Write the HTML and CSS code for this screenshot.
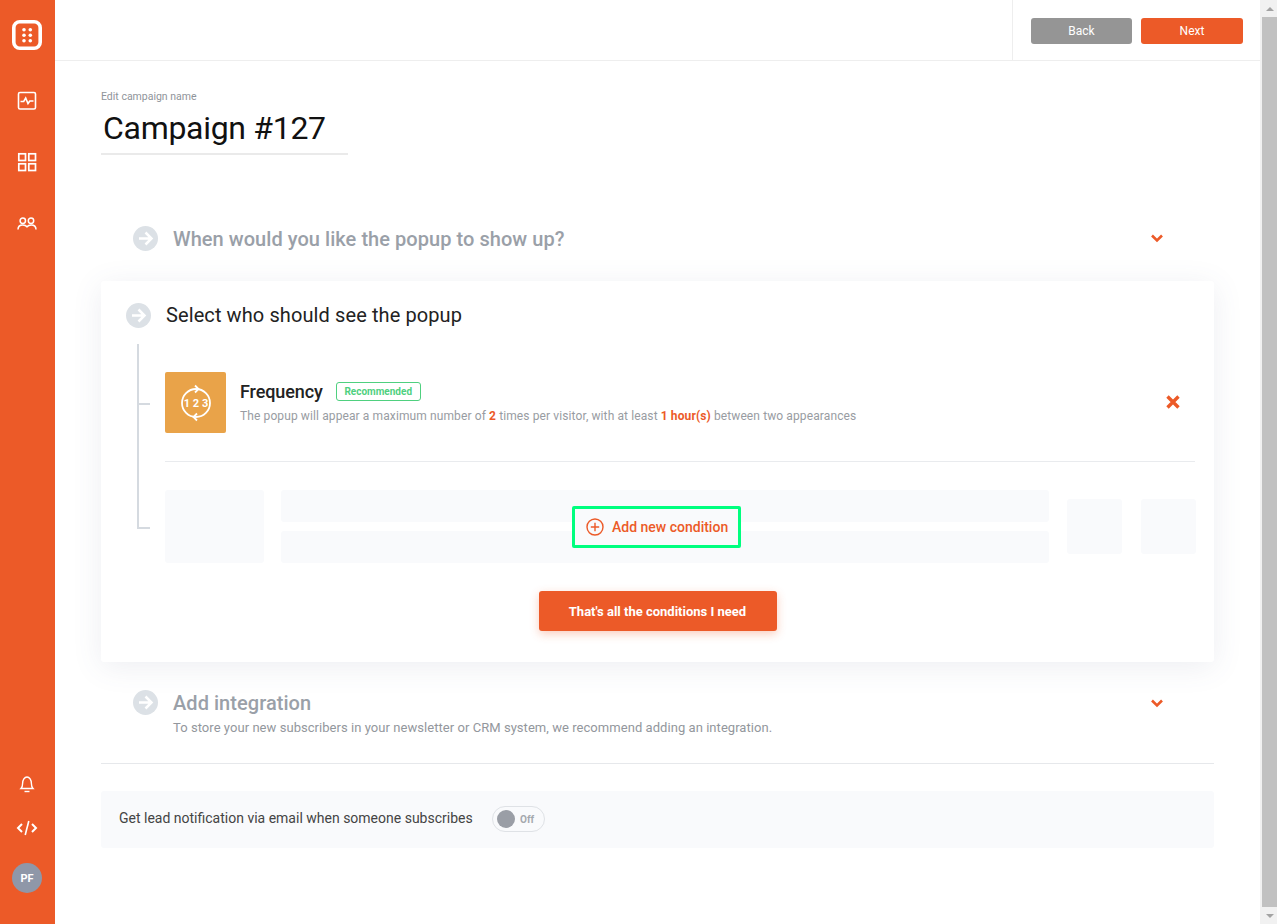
FILE: index.html
```html
<!DOCTYPE html>
<html lang="en">
<head>
    <meta charset="UTF-8">
    <title>Campaign #127</title>
    <link rel="stylesheet" href="styles.css">
</head>
<body>
    <div class="app">
        <nav class="sidebar">
            <div class="logo">
                <svg width="30" height="30" viewBox="0 0 30 30"><rect x="1.800" y="1.800" width="26.400" height="26.400" rx="6" fill="none" stroke="#fff" stroke-width="3.600"/><g fill="#fff"><circle cx="12" cy="9.800" r="1.800"/><circle cx="18.300" cy="9.800" r="1.800"/><circle cx="12" cy="15.300" r="1.800"/><circle cx="18.300" cy="15.300" r="1.800"/><circle cx="12" cy="20.800" r="1.800"/><circle cx="18.300" cy="20.800" r="1.800"/></g></svg>
            </div>
            <a class="nav-item">
                <svg width="20" height="20" viewBox="0 0 20 20" fill="none" stroke="#fff" stroke-width="1.600"><rect x="1.500" y="1.500" width="17" height="16.500" rx="1.500"/><path d="M3.500 10.500h3.200l2-3.500 2.300 5.500 1.800-2.500h3.700"/></svg>
            </a>
            <a class="nav-item">
                <svg width="20" height="20" viewBox="0 0 20 20" fill="none" stroke="#fff" stroke-width="1.700"><rect x="1.800" y="1.800" width="6.700" height="6.700"/><rect x="11.800" y="1.800" width="6.700" height="6.700"/><rect x="1.800" y="11.800" width="6.700" height="6.700"/><rect x="11.800" y="11.800" width="6.700" height="6.700"/></svg>
            </a>
            <a class="nav-item">
                <svg width="20" height="20" viewBox="0 0 20 20" fill="none" stroke="#fff" stroke-width="1.500"><circle cx="5.800" cy="7.800" r="2.700"/><circle cx="14" cy="7.800" r="2.700"/><path d="M1 16.500c0-3 2.200-4.600 4.800-4.600 1.800 0 3.300.6 4.200 1.800.9-1.200 2.400-1.800 4.200-1.800 2.600 0 4.800 1.600 4.800 4.600"/></svg>
            </a>
            <div class="sidebar-bottom">
                <a class="nav-item">
                    <svg width="20" height="20" viewBox="0 0 20 20" fill="none" stroke="#fff" stroke-width="1.400"><path d="M4 14.500c1-1 1.600-2 1.600-5 0-3.500 1.900-6.500 4.400-6.500s4.400 3 4.400 6.500c0 3 .6 4 1.600 5z"/><path d="M7.500 17.500h5"/></svg>
                </a>
                <a class="nav-item">
                    <svg width="22" height="20" viewBox="0 0 22 20" fill="none" stroke="#fff" stroke-width="2"><path d="M6 6l-4 4 4 4M16 6l4 4-4 4"/><path d="M12.800 3l-3.600 14" stroke-width="1.600"/></svg>
                </a>
                <div class="avatar">PF</div>
            </div>
        </nav>

        <div class="main">
            <header class="topbar">
                <div class="topbar-actions">
                    <button class="btn btn-back">Back</button>
                    <button class="btn btn-next">Next</button>
                </div>
            </header>

            <div class="content">
                <div class="campaign-name">
                    <label>Edit campaign name</label>
                    <div class="name-input">Campaign #127</div>
                </div>

                <section class="step">
                    <span class="step-arrow">
                        <svg width="25" height="25" viewBox="0 0 25 25"><circle cx="12.500" cy="12.500" r="12.500" fill="#dce1e6"/><path d="M6 12.500h12M12.500 6.500l6 6-6 6" fill="none" stroke="#fff" stroke-width="2.500"/></svg>
                    </span>
                    <div class="step-body">
                        <h2>When would you like the popup to show up?</h2>
                    </div>
                    <svg class="chevron" width="14" height="10" viewBox="0 0 14 10"><path d="M2 2.500l5 5 5-5" fill="none" stroke="#ec5a28" stroke-width="2.600"/></svg>
                </section>

                <section class="card">
                    <div class="card-title">
                        <svg width="25" height="25" viewBox="0 0 25 25"><circle cx="12.500" cy="12.500" r="12.500" fill="#dce1e6"/><path d="M6 12.500h12M12.500 6.500l6 6-6 6" fill="none" stroke="#fff" stroke-width="2.500"/></svg>
                        <h2>Select who should see the popup</h2>
                    </div>

                    <div class="tree">
                        <div class="tree-line"></div>
                        <div class="tree-tick"></div>
                        <div class="tree-rows">
                            <div class="condition">
                                <div class="condition-icon">
                                    <svg width="34" height="38" viewBox="0 0 34 38" fill="none" stroke="#fff" stroke-width="1.800"><circle cx="17" cy="19" r="14"/><path d="M16 1.500l3.500 3.500-3.500 3.500M18 29.500L14.500 33l3.500 3.500"/><text x="17" y="23" text-anchor="middle" class="icon-digits">1 2 3</text></svg>
                                </div>
                                <div class="condition-text">
                                    <div class="condition-head">
                                        <h3>Frequency</h3>
                                        <span class="badge">Recommended</span>
                                    </div>
                                    <p>The popup will appear a maximum number of <b>2</b> times per visitor, with at least <b>1 hour(s)</b> between two appearances</p>
                                </div>
                                <svg class="remove" width="16" height="16" viewBox="0 0 16 16"><path d="M2.500 2.500l11 11M13.500 2.500l-11 11" stroke="#ec5a28" stroke-width="3.400"/></svg>
                            </div>
                            <div class="placeholder">
                                <div class="ph ph-icon"></div>
                                <div class="ph-lines">
                                    <div class="ph ph-line"></div>
                                    <div class="ph ph-line"></div>
                                </div>
                                <div class="ph ph-square"></div>
                                <div class="ph ph-square"></div>
                                <button class="add-condition">
                                    <svg width="18" height="18" viewBox="0 0 18 18" fill="none" stroke="#ec5a28" stroke-width="1.400"><circle cx="9" cy="9" r="8"/><path d="M9 4.800v8.400M4.800 9h8.400"/></svg>
                                    Add new condition
                                </button>
                            </div>
                        </div>
                    </div>

                    <div class="card-footer">
                        <button class="btn-done">That's all the conditions I need</button>
                    </div>
                </section>

                <section class="step step-last">
                    <span class="step-arrow">
                        <svg width="25" height="25" viewBox="0 0 25 25"><circle cx="12.500" cy="12.500" r="12.500" fill="#dce1e6"/><path d="M6 12.500h12M12.500 6.500l6 6-6 6" fill="none" stroke="#fff" stroke-width="2.500"/></svg>
                    </span>
                    <div class="step-body">
                        <h2>Add integration</h2>
                        <p>To store your new subscribers in your newsletter or CRM system, we recommend adding an integration.</p>
                    </div>
                    <svg class="chevron" width="14" height="10" viewBox="0 0 14 10"><path d="M2 2.500l5 5 5-5" fill="none" stroke="#ec5a28" stroke-width="2.600"/></svg>
                </section>

                <div class="notify">
                    <span class="notify-text">Get lead notification via email when someone subscribes</span>
                    <div class="toggle">
                        <span class="toggle-knob"></span>
                        <span class="toggle-label">Off</span>
                    </div>
                </div>
            </div>
        </div>

        <div class="scrollbar">
            <span class="arrow-up"></span>
            <div class="thumb"></div>
            <span class="arrow-down"></span>
        </div>
    </div>
</body>
</html>
```

FILE: styles.css
```css
body {
    font-family: 'Roboto', sans-serif;
    margin: 0;
    padding: 0;
    background-color: #fff;
    color: #222;
    overflow: hidden;
}
h2, h3, p {
    margin: 0;
}
button {
    font-family: inherit;
    border: none;
    cursor: pointer;
}
.app {
    display: flex;
    height: 924px;
}

/* Sidebar */
.sidebar {
    width: 55px;
    flex-shrink: 0;
    background-color: #ec5a28;
    display: flex;
    flex-direction: column;
    align-items: center;
    padding-top: 20px;
    box-sizing: border-box;
}
.logo {
    height: 30px;
    margin-bottom: 20px;
    margin-left: -1px;
}
.nav-item {
    height: 61px;
    display: flex;
    align-items: center;
    justify-content: center;
    margin-left: -1px;
}
.sidebar-bottom {
    margin-top: auto;
    display: flex;
    flex-direction: column;
    align-items: center;
    padding-bottom: 31px;
}
.sidebar-bottom .nav-item {
    height: 44px;
}
.avatar {
    width: 30px;
    height: 30px;
    margin-top: 13px;
    margin-left: -1px;
    border-radius: 50%;
    background-color: #8f97a8;
    color: #fff;
    font-size: 11px;
    font-weight: 700;
    display: flex;
    align-items: center;
    justify-content: center;
}

/* Top bar */
.main {
    flex: 1;
    min-width: 0;
}
.topbar {
    height: 60px;
    border-bottom: 1px solid #eee;
    display: flex;
    justify-content: flex-end;
}
.topbar-actions {
    width: 248px;
    border-left: 1px solid #eee;
    display: flex;
    align-items: center;
    gap: 9px;
    padding: 2px 17px 0 18px;
    box-sizing: border-box;
}
.btn {
    width: 102px;
    height: 26px;
    border-radius: 3px;
    color: #fff;
    font-size: 12px;
    font-weight: 400;
}
.btn-back {
    width: 101px;
    background-color: #959595;
}
.btn-next {
    background-color: #ec5a28;
}

/* Campaign name */
.content {
    padding: 29px 46px 0 46px;
}
.campaign-name {
    width: 247px;
}
.campaign-name label {
    display: block;
    font-size: 10.5px;
    line-height: 13px;
    color: #8f949a;
}
.name-input {
    font-size: 32px;
    line-height: 38px;
    letter-spacing: -0.3px;
    color: #111;
    padding: 6px 0 6px 2px;
    border-bottom: 2px solid #eaeaea;
}

/* Steps */
.step {
    display: flex;
    align-items: flex-start;
    padding: 0 50px 0 32px;
    margin-top: 71px;
    height: 55px;
}
.step h2 {
    font-size: 20px;
    line-height: 26px;
    font-weight: 500;
    letter-spacing: 0.05px;
    color: #9aa0a8;
}
.step p {
    margin-top: 4px;
    font-size: 13px;
    line-height: 16px;
    letter-spacing: 0.05px;
    color: #93979d;
}
.step-arrow {
    width: 25px;
    height: 25px;
    margin-right: 15px;
}
.step-body {
    flex: 1;
}
.chevron {
    margin-top: 7px;
}
.step-last {
    margin-top: 28px;
    height: 73px;
    border-bottom: 1px solid #e6e8eb;
}
.step-last .chevron {
    margin-top: 8px;
}

/* Card */
.card {
    height: 381px;
    box-sizing: border-box;
    padding: 22px 19px 0 25px;
    background-color: #fff;
    border-radius: 3px;
    box-shadow: 0 5px 30px rgba(80, 90, 130, 0.1);
}
.card-title {
    display: flex;
    align-items: center;
    gap: 15px;
}
.card-title h2 {
    font-size: 20px;
    line-height: 25px;
    font-weight: 400;
    letter-spacing: 0.1px;
    color: #222;
}
.tree {
    position: relative;
    margin-top: 16px;
    padding-left: 39px;
}
.tree-line {
    position: absolute;
    left: 11px;
    top: 0;
    width: 13px;
    height: 185px;
    border-left: 2px solid #d5dae0;
    border-bottom: 2px solid #d5dae0;
    box-sizing: border-box;
}
.tree-tick {
    position: absolute;
    left: 11px;
    top: 59px;
    width: 13px;
    height: 2px;
    background-color: #d5dae0;
}
.tree-rows {
    padding-top: 28px;
}
.condition {
    display: flex;
    align-items: center;
    border-bottom: 1px solid #e9ebee;
    padding-bottom: 28px;
    height: 61px;
}
.condition-icon {
    width: 61px;
    height: 61px;
    background-color: #e9a349;
    border-radius: 2px;
    display: flex;
    align-items: center;
    justify-content: center;
    flex-shrink: 0;
}
.icon-digits {
    fill: #fff;
    stroke: none;
    font-size: 11px;
    font-weight: 700;
}
.condition-text {
    flex: 1;
    margin-left: 14px;
    margin-top: -2px;
}
.condition-head {
    display: flex;
    align-items: center;
    gap: 13px;
}
.condition-head h3 {
    font-size: 18px;
    line-height: 24px;
    font-weight: 500;
    letter-spacing: -0.1px;
    color: #222;
}
.badge {
    width: 85px;
    height: 19px;
    box-sizing: border-box;
    border: 1px solid #4fd07f;
    border-radius: 3px;
    color: #4fd07f;
    font-size: 10px;
    font-weight: 700;
    line-height: 17px;
    text-align: center;
}
.condition-text p {
    margin-top: 4px;
    font-size: 12px;
    line-height: 16px;
    letter-spacing: 0.11px;
    color: #989ca2;
}
.condition-text b {
    color: #ec5a28;
    font-weight: 700;
}
.remove {
    margin-right: 14px;
    margin-top: -2px;
}

/* Placeholder rows */
.placeholder {
    position: relative;
    display: flex;
    align-items: center;
    gap: 18px;
    margin-top: 28px;
    height: 73px;
}
.ph {
    background-color: #f9fafc;
    border-radius: 3px;
    flex-shrink: 0;
}
.ph-icon {
    width: 99px;
    height: 73px;
    margin-right: -1px;
}
.ph-lines {
    flex: 1;
    display: flex;
    flex-direction: column;
    gap: 9px;
}
.ph-line {
    height: 32px;
}
.ph-square {
    width: 55px;
    height: 55px;
}
.ph-square + .ph-square {
    margin: 0 -1px 0 1px;
}
.add-condition {
    position: absolute;
    left: 407px;
    top: 16px;
    width: 169px;
    height: 42px;
    box-sizing: border-box;
    border: 3px solid #00ff7f;
    border-radius: 2px;
    background-color: #f9fafc;
    color: #ec5a28;
    font-size: 14px;
    font-weight: 500;
    display: flex;
    align-items: center;
    gap: 8px;
    padding: 0 0 0 11px;
}
.card-footer {
    display: flex;
    justify-content: center;
    margin-top: 28px;
    margin-left: -6px;
}
.btn-done {
    width: 238px;
    height: 40px;
    background-color: #ec5a28;
    color: #fff;
    font-size: 13px;
    font-weight: 700;
    border-radius: 3px;
    box-shadow: 0 3px 10px rgba(239, 91, 40, 0.3);
}

/* Notification row */
.notify {
    margin-top: 27px;
    height: 57px;
    box-sizing: border-box;
    padding: 0 18px 1px;
    background-color: #f9fafc;
    border-radius: 3px;
    display: flex;
    align-items: center;
    gap: 20px;
    font-size: 14px;
    color: #444;
}
.notify-text {
    margin-bottom: 2px;
    width: 353px;
    white-space: nowrap;
}
.toggle {
    width: 53px;
    height: 26px;
    box-sizing: border-box;
    border: 1px solid #dfe2e6;
    border-radius: 13px;
    display: flex;
    align-items: center;
    padding-left: 4px;
    gap: 5px;
}
.toggle-knob {
    width: 18px;
    height: 18px;
    border-radius: 50%;
    background-color: #9a9ea6;
}
.toggle-label {
    font-size: 10px;
    font-weight: 700;
    color: #a4a8ae;
}

/* Scrollbar */
.scrollbar {
    width: 17px;
    flex-shrink: 0;
    background-color: #f1f1f1;
    display: flex;
    flex-direction: column;
    align-items: flex-end;
}
.thumb {
    flex: 1;
    width: 15px;
    background-color: #c1c1c1;
}
.arrow-up,
.arrow-down {
    height: 17px;
    width: 15px;
    display: flex;
    align-items: center;
    justify-content: center;
}
.arrow-up::before {
    content: "";
    border: 4px solid transparent;
    border-top: 0;
    border-bottom: 4px solid #a3a3a3;
}
.arrow-down::before {
    content: "";
    border: 4px solid transparent;
    border-bottom: 0;
    border-top: 4px solid #a3a3a3;
}
```
